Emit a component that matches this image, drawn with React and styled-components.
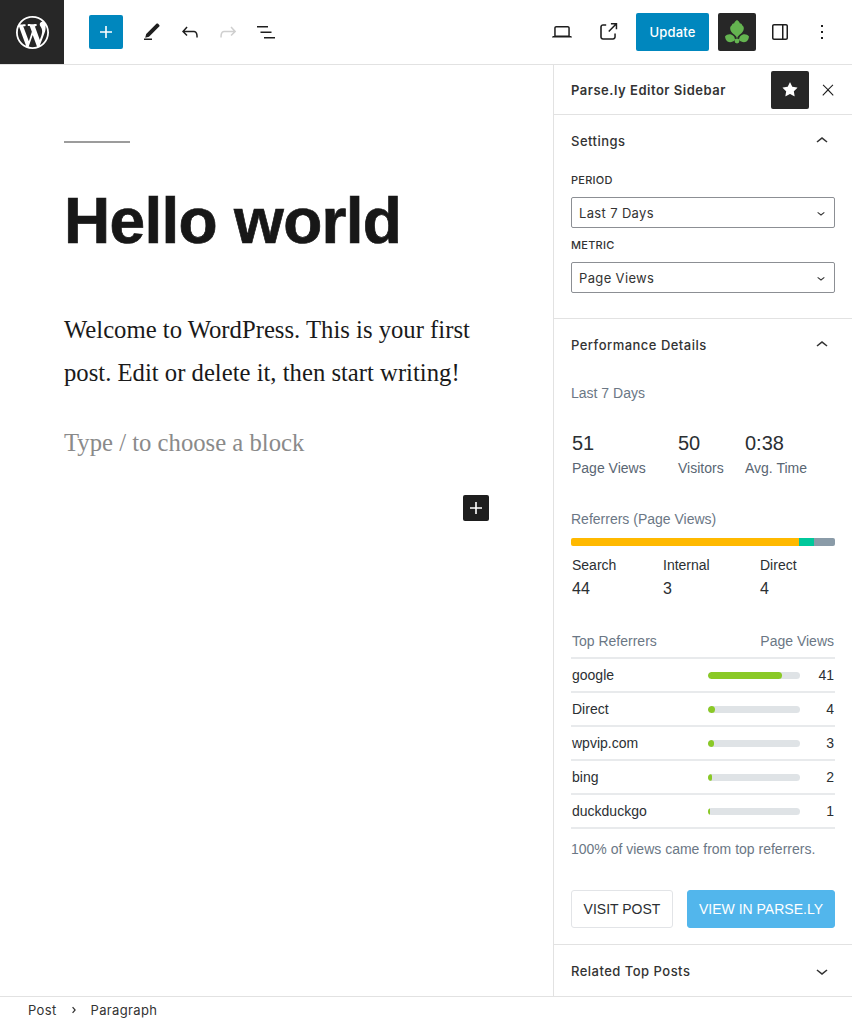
import React from 'react';
import styled, { createGlobalStyle } from 'styled-components';

const GlobalStyle = createGlobalStyle`
  html, body {
    margin: 0;
    padding: 0;
    background: #fff;
  }
  * {
    box-sizing: border-box;
  }
`;

const ui = `Inter, 'Liberation Sans', sans-serif`;
const parsely = `'Liberation Sans', Arial, sans-serif`;

const Page = styled.div`
  width: 852px;
  height: 1023px;
  display: flex;
  flex-direction: column;
  overflow: hidden;
  font-family: ${ui};
  color: #1e1e1e;
`;

// Top toolbar
const Header = styled.header`
  height: 65px;
  flex: none;
  display: flex;
  align-items: center;
  border-bottom: 1px solid #e2e2e2;
`;

const LogoTile = styled.div`
  width: 64px;
  height: 64px;
  flex: none;
  display: flex;
  align-items: center;
  justify-content: center;
  background: #272727;
`;

const HeaderLeft = styled.div`
  display: flex;
  align-items: center;
  gap: 6px;
  margin-left: 25px;
`;

const HeaderRight = styled.div`
  display: flex;
  align-items: center;
  margin-left: auto;
  margin-right: 14px;
`;

const IconSlot = styled.span`
  width: ${(p) => p.$w || 32}px;
  height: 32px;
  display: flex;
  align-items: center;
  justify-content: center;
  color: ${(p) => p.$color || '#1e1e1e'};
  margin-right: ${(p) => p.$mr || 0}px;
`;

const InsertButton = styled.div`
  width: 34px;
  height: 34px;
  margin-right: 7px;
  display: flex;
  align-items: center;
  justify-content: center;
  background: #0087be;
  border-radius: 2px;
  color: #fff;
`;

const UpdateButton = styled.div`
  width: 73px;
  height: 38px;
  display: flex;
  align-items: center;
  justify-content: center;
  background: #0087be;
  border-radius: 2px;
  color: #fff;
  font-size: 13px;
  font-weight: 500;
  letter-spacing: 0.2px;
  margin-right: 9px;
`;

const ParselyButton = styled.div`
  width: 38px;
  height: 38px;
  display: flex;
  align-items: center;
  justify-content: center;
  background: #272727;
  border-radius: 2px;
  margin-right: 8px;
`;

const Body = styled.div`
  flex: 1;
  min-height: 0;
  display: flex;
`;

// Post canvas
const Editor = styled.main`
  flex: 1;
  display: flex;
  flex-direction: column;
  padding: 76px 64px 0;
`;

const Rule = styled.div`
  width: 66px;
  height: 2px;
  background: #9c9c9c;
`;

const Title = styled.h1`
  margin: 36px 0 0;
  font-family: 'Liberation Sans', Arial, sans-serif;
  font-size: 64px;
  line-height: 84px;
  font-weight: 700;
  letter-spacing: -0.7px;
  -webkit-text-stroke: 0.7px #171717;
  color: #171717;
`;

const Paragraph = styled.p`
  margin: ${(p) => p.$mt}px 0 0;
  font-family: 'Liberation Serif', serif;
  font-size: 24.7px;
  line-height: 42.5px;
  color: ${(p) => p.$color || '#1a1a1a'};
`;

const Inserter = styled.div`
  width: 26px;
  height: 26px;
  margin: 30.5px 0 0 auto;
  display: flex;
  align-items: center;
  justify-content: center;
  background: #1e1e1e;
  border-radius: 2px;
  color: #fff;
`;

// Right sidebar
const Sidebar = styled.aside`
  width: 299px;
  flex: none;
  display: flex;
  flex-direction: column;
  border-left: 1px solid #e2e2e2;
`;

const SidebarHead = styled.div`
  height: 50px;
  flex: none;
  display: flex;
  align-items: center;
  padding-left: 17px;
  border-bottom: 1px solid #e2e2e2;
  font-size: 13px;
  font-weight: 600;
  letter-spacing: 0.52px;
  color: #333;
`;

const StarButton = styled.div`
  width: 38px;
  height: 38px;
  margin-left: auto;
  display: flex;
  align-items: center;
  justify-content: center;
  background: #272727;
  border-radius: 2px;
  color: #fff;
`;

const CloseSlot = styled.div`
  width: 38px;
  margin-right: 5px;
  display: flex;
  justify-content: center;
  color: #1e1e1e;
`;

const Panel = styled.section`
  flex: none;
  height: ${(p) => p.$h}px;
  padding: 0 17px;
  border-bottom: ${(p) => (p.$last ? 'none' : '1px solid #e2e2e2')};
`;

const PanelTitle = styled.div`
  height: ${(p) => p.$h || 52}px;
  display: flex;
  align-items: center;
  justify-content: space-between;
  font-size: 13px;
  font-weight: 500;
  letter-spacing: 0.48px;
  color: #333;

  svg {
    margin-right: 1px;
  }
`;

const FieldLabel = styled.div`
  font-size: 11px;
  line-height: 14px;
  font-weight: 500;
  letter-spacing: 0.25px;
  color: #333;
  margin: ${(p) => p.$mt}px 0 10px;
`;

const SelectBox = styled.div`
  height: 31px;
  display: flex;
  align-items: center;
  justify-content: space-between;
  padding: 0 5px 0 7px;
  border: 1px solid #8c8f94;
  border-radius: 2px;
  font-size: 13px;
  letter-spacing: 0.35px;
  color: #333;
`;

const MutedLine = styled.div`
  font-family: ${parsely};
  font-size: 14px;
  line-height: 18px;
  color: #6b7785;
  margin-top: ${(p) => p.$mt}px;
`;

const StatGrid = styled.div`
  display: flex;
  margin: 29px 0 0 1px;
  font-family: ${parsely};
`;

const Stat = styled.div`
  width: ${(p) => p.$w}px;
`;

const StatValue = styled.div`
  font-size: 20px;
  line-height: 24px;
  color: #2b2f33;
`;

const StatLabel = styled.div`
  font-size: 14px;
  line-height: 18px;
  margin-top: 4px;
  color: #596673;
`;

const StackBar = styled.div`
  height: 8px;
  margin-top: 10px;
  display: flex;
  border-radius: 2px;
  overflow: hidden;
`;

const StackPart = styled.div`
  width: ${(p) => p.$w}px;
  background: ${(p) => p.$color};
`;

const SourceGrid = styled.div`
  display: flex;
  margin: 10px 0 0 1px;
  font-family: ${parsely};
`;

const Source = styled.div`
  width: ${(p) => p.$w}px;
`;

const SourceLabel = styled.div`
  font-size: 14px;
  line-height: 18px;
  color: #2b2f33;
`;

const SourceValue = styled.div`
  font-size: 16px;
  line-height: 20px;
  margin-top: 5px;
  color: #2b2f33;
`;

const RefHead = styled.div`
  height: 27px;
  margin-top: 33px;
  padding: 0 1px 9px;
  display: flex;
  justify-content: space-between;
  border-bottom: 2px solid #e8eaec;
  font-family: ${parsely};
  font-size: 14px;
  line-height: 18px;
  color: #6b7785;
`;

const RefRow = styled.div`
  height: 34px;
  padding: 0 1px;
  display: flex;
  align-items: center;
  border-bottom: 2px solid #e8eaec;
  font-family: ${parsely};
  font-size: 14px;
  color: #2b2f33;
`;

const RefName = styled.span`
  width: 136px;
`;

const RefTrack = styled.div`
  width: 92px;
  height: 7px;
  background: #dfe3e6;
  border-radius: 4px;
  overflow: hidden;
`;

const RefFill = styled.div`
  height: 100%;
  background: #8ac926;
  border-radius: 4px;
`;

const RefCount = styled.span`
  margin-left: auto;
`;

const Actions = styled.div`
  display: flex;
  justify-content: space-between;
  margin-top: 32px;
  font-family: ${parsely};
  font-size: 14px;
`;

const ActionButton = styled.div`
  width: ${(p) => p.$w}px;
  height: 38px;
  display: flex;
  align-items: center;
  justify-content: center;
  border-radius: 3px;
  border: 1px solid ${(p) => (p.$primary ? '#52b6ec' : '#e2e4e7')};
  background: ${(p) => (p.$primary ? '#52b6ec' : '#fff')};
  color: ${(p) => (p.$primary ? '#fff' : '#2b2f33')};
`;

// Bottom breadcrumb bar
const StatusBar = styled.footer`
  height: 27px;
  flex: none;
  display: flex;
  align-items: center;
  padding-left: 28px;
  border-top: 1px solid #e2e2e2;
  background: #fff;
  font-size: 13px;
  letter-spacing: 0.35px;
  color: #333;
`;

const Crumb = styled.span`
  display: flex;
  align-items: center;
`;

const CrumbGap = styled.span`
  width: 34px;
  display: flex;
  justify-content: center;
`;

const Icon = ({ d, size = 24, fill = 'currentColor', viewBox = '0 0 24 24' }) => (
  <svg width={size} height={size} viewBox={viewBox} fill={fill} aria-hidden="true">
    <path d={d} />
  </svg>
);

const paths = {
  plus: 'M18 11.2h-5.2V6h-1.6v5.2H6v1.6h5.2V18h1.6v-5.2H18z',
  edit: 'M16.4 3.8c.5-.5 1.2-.5 1.7 0l1.1 1.1c.5.5.5 1.2 0 1.7L9 16.8l-3.8 1 1-3.8L16.4 3.8zM4 20h8v-1.5H4V20z',
  undo: 'M18.3 11.7c-.6-.6-1.4-.9-2.3-.9H6.7l2.9-3.3-1.1-1-4.5 5L8.5 16l1-1-2.7-2.7H16c.5 0 .9.2 1.3.5 1 1 1 3.4 1 4.5v.3h1.5v-.2c0-1.5 0-4.3-1.5-5.7z',
  redo: 'M15.6 6.5l-1.1 1 2.9 3.3H8c-.9 0-1.7.3-2.3.9-1.4 1.5-1.4 4.2-1.4 5.6v.2h1.5v-.3c0-1.1 0-3.5 1-4.5.3-.3.7-.5 1.3-.5h9.2L14.5 15l1.1 1.1 4.6-4.6-4.6-5z',
  list: 'M3 6h11v1.5H3V6zm3.5 5.5h11V13h-11v-1.5zM21 17H10v1.5h11V17z',
  laptop: 'M20.5 16h-.7V8c0-1.1-.9-2-2-2H6.2c-1.1 0-2 .9-2 2v8h-.7c-.8 0-1.5.7-1.5 1.5h20c0-.8-.7-1.5-1.5-1.5zM5.7 8c0-.3.2-.5.5-.5h11.6c.3 0 .5.2.5.5v7.6H5.7V8z',
  external: 'M18.2 17c0 .7-.6 1.2-1.2 1.2H7c-.7 0-1.2-.6-1.2-1.2V7c0-.7.6-1.2 1.2-1.2h3.2V4.2H7C5.5 4.2 4.2 5.5 4.2 7v10c0 1.5 1.2 2.8 2.8 2.8h10c1.5 0 2.8-1.2 2.8-2.8v-3.6h-1.5V17zM14.9 3v1.5h3.7l-6.4 6.4 1.1 1.1 6.4-6.4v3.7h1.5V3h-6.3z',
  drawer: 'M18 4H6c-1.1 0-2 .9-2 2v12c0 1.1.9 2 2 2h12c1.1 0 2-.9 2-2V6c0-1.1-.9-2-2-2zm-4 14.5H6c-.3 0-.5-.2-.5-.5V6c0-.3.2-.5.5-.5h8v13zm4.5-.5c0 .3-.2.5-.5.5h-2.5v-13H18c.3 0 .5.2.5.5v12z',
  more: 'M13 19h-2v-2h2v2zm0-6h-2v-2h2v2zm0-6h-2V5h2v2z',
  close: 'M13 11.8l6.1-6.3-1-1-6.1 6.2-6.1-6.2-1 1 6.1 6.3-6.5 6.7 1 1 6.5-6.6 6.5 6.6 1-1z',
  star: 'M11.776 4.454a.25.25 0 01.448 0l2.069 4.192a.25.25 0 00.188.137l4.626.672a.25.25 0 01.139.426l-3.348 3.263a.25.25 0 00-.072.222l.79 4.607a.25.25 0 01-.362.263l-4.138-2.175a.25.25 0 00-.232 0l-4.138 2.175a.25.25 0 01-.363-.263l.79-4.607a.25.25 0 00-.071-.222L4.754 9.881a.25.25 0 01.139-.426l4.626-.672a.25.25 0 00.188-.137l2.069-4.192z',
  up: 'M6.5 12.4L12 8l5.5 4.4-.9 1.2L12 10l-4.5 3.6-1-1.2z',
  down: 'M17.5 11.6L12 16l-5.5-4.4.9-1.2L12 14l4.5-3.6 1 1.2z',
  crumb: 'M10.8622 8.04053L14.2805 12.0286L10.8622 16.0167L9.72327 15.0405L12.3049 12.0286L9.72327 9.01672L10.8622 8.04053Z',
  wp: 'M20 10c0-5.51-4.49-10-10-10C4.48 0 0 4.49 0 10c0 5.52 4.48 10 10 10 5.51 0 10-4.48 10-10zM7.78 15.37L4.37 6.22c.55-.02 1.17-.08 1.17-.08.5-.06.44-1.13-.06-1.11 0 0-1.45.11-2.37.11-.18 0-.37 0-.58-.01C4.12 2.69 6.87 1.11 10 1.11c2.33 0 4.45.87 6.05 2.34-.68-.11-1.65.39-1.65 1.58 0 .74.45 1.36.9 2.1.35.61.55 1.36.55 2.46 0 1.49-1.4 5-1.4 5l-3.03-8.37c.54-.02.82-.17.82-.17.5-.05.44-1.25-.06-1.22 0 0-1.44.12-2.38.12-.87 0-2.33-.12-2.33-.12-.5-.03-.56 1.2-.06 1.22l.92.08 1.26 3.41zM17.41 10c.24-.64.74-1.87.43-4.25.7 1.29 1.05 2.71 1.05 4.25 0 3.29-1.73 6.24-4.4 7.78.97-2.59 1.94-5.2 2.92-7.78zM6.1 18.09C3.12 16.65 1.11 13.53 1.11 10c0-1.3.23-2.48.72-3.59C3.25 10.3 4.67 14.2 6.1 18.09zm4.03-6.63l2.58 6.98c-.86.29-1.76.45-2.71.45-.79 0-1.57-.11-2.29-.33.81-2.38 1.62-4.74 2.42-7.1z',
};

// Parse.ly sprig: a lobed centre leaf, two side leaves and a small round bud
const ParselyLogo = () => (
  <svg width="26" height="26" viewBox="0 0 26 26" fill="#64b450" aria-hidden="true">
    <path d="M13 1C14.5 2 15.5 3 15.8 4.2C17 4.2 18 5 18.2 6.2C19.4 7 20 8.3 19.8 9.8C19.6 12 18 14.5 15.5 15.8L13.8 17.5V18.5H12.2V17.5L10.5 15.8C8 14.5 6.4 12 6.2 9.8C6 8.3 6.6 7 7.8 6.2C8 5 9 4.2 10.2 4.2C10.5 3 11.5 2 13 1Z" />
    <path d="M1 17.5C3 15 7 14.5 9.5 17C10.5 18 11 19.5 11 21C9 23 6 24 3.5 22.5C2 21.5 1.3 19.5 1 17.5Z" />
    <path d="M25 17.5C23 15 19 14.5 16.5 17C15.5 18 15 19.5 15 21C17 23 20 24 22.5 22.5C24 21.5 24.7 19.5 25 17.5Z" />
    <circle cx="13" cy="22" r="2.4" />
  </svg>
);

const referrers = [
  { name: 'google', pct: 80, count: 41 },
  { name: 'Direct', pct: 8, count: 4 },
  { name: 'wpvip.com', pct: 6, count: 3 },
  { name: 'bing', pct: 4, count: 2 },
  { name: 'duckduckgo', pct: 2, count: 1 },
];

const App = () => {
  return (
    <>
      <GlobalStyle />
      <Page>
        <Header>
          <LogoTile>
            <Icon d={paths.wp} size={33} viewBox="0 0 20 20" fill="#fff" />
          </LogoTile>
          <HeaderLeft>
            <InsertButton>
              <Icon d={paths.plus} />
            </InsertButton>
            <IconSlot>
              <Icon d={paths.edit} />
            </IconSlot>
            <IconSlot>
              <Icon d={paths.undo} />
            </IconSlot>
            <IconSlot $color="#cfcfcf">
              <Icon d={paths.redo} />
            </IconSlot>
            <IconSlot>
              <Icon d={paths.list} />
            </IconSlot>
          </HeaderLeft>
          <HeaderRight>
            <IconSlot $mr={14}>
              <Icon d={paths.laptop} />
            </IconSlot>
            <IconSlot $mr={12}>
              <Icon d={paths.external} />
            </IconSlot>
            <UpdateButton>Update</UpdateButton>
            <ParselyButton>
              <ParselyLogo />
            </ParselyButton>
            <IconSlot $mr={10}>
              <Icon d={paths.drawer} />
            </IconSlot>
            <IconSlot>
              <Icon d={paths.more} />
            </IconSlot>
          </HeaderRight>
        </Header>

        <Body>
          <Editor>
            <Rule />
            <Title>Hello world</Title>
            <Paragraph $mt={46}>
              Welcome to WordPress. This is your first post. Edit or delete it, then start writing!
            </Paragraph>
            <Paragraph $mt={28} $color="#8a8a8a">
              Type / to choose a block
            </Paragraph>
            <Inserter>
              <Icon d={paths.plus} />
            </Inserter>
          </Editor>

          <Sidebar>
            <SidebarHead>
              Parse.ly Editor Sidebar
              <StarButton>
                <Icon d={paths.star} />
              </StarButton>
              <CloseSlot>
                <Icon d={paths.close} size={18} />
              </CloseSlot>
            </SidebarHead>

            <Panel $h={204}>
              <PanelTitle>
                Settings
                <Icon d={paths.up} />
              </PanelTitle>
              <FieldLabel $mt={6}>PERIOD</FieldLabel>
              <SelectBox>
                Last 7 Days
                <Icon d={paths.down} size={16} />
              </SelectBox>
              <FieldLabel $mt={10}>METRIC</FieldLabel>
              <SelectBox>
                Page Views
                <Icon d={paths.down} size={16} />
              </SelectBox>
            </Panel>

            <Panel $h={626}>
              <PanelTitle>
                Performance Details
                <Icon d={paths.up} />
              </PanelTitle>
              <MutedLine $mt={13}>Last 7 Days</MutedLine>
              <StatGrid>
                <Stat $w={106}>
                  <StatValue>51</StatValue>
                  <StatLabel>Page Views</StatLabel>
                </Stat>
                <Stat $w={67}>
                  <StatValue>50</StatValue>
                  <StatLabel>Visitors</StatLabel>
                </Stat>
                <Stat $w={80}>
                  <StatValue>0:38</StatValue>
                  <StatLabel>Avg. Time</StatLabel>
                </Stat>
              </StatGrid>
              <MutedLine $mt={33}>Referrers (Page Views)</MutedLine>
              <StackBar>
                <StackPart $w={228} $color="#ffb900" />
                <StackPart $w={15} $color="#00c89b" />
                <StackPart $w={21} $color="#8a9ba8" />
              </StackBar>
              <SourceGrid>
                <Source $w={91}>
                  <SourceLabel>Search</SourceLabel>
                  <SourceValue>44</SourceValue>
                </Source>
                <Source $w={97}>
                  <SourceLabel>Internal</SourceLabel>
                  <SourceValue>3</SourceValue>
                </Source>
                <Source $w={70}>
                  <SourceLabel>Direct</SourceLabel>
                  <SourceValue>4</SourceValue>
                </Source>
              </SourceGrid>
              <RefHead>
                <span>Top Referrers</span>
                <span>Page Views</span>
              </RefHead>
              {referrers.map((r) => (
                <RefRow key={r.name}>
                  <RefName>{r.name}</RefName>
                  <RefTrack>
                    <RefFill style={{ width: `${r.pct}%` }} />
                  </RefTrack>
                  <RefCount>{r.count}</RefCount>
                </RefRow>
              ))}
              <MutedLine $mt={11}>100% of views came from top referrers.</MutedLine>
              <Actions>
                <ActionButton $w={102}>VISIT POST</ActionButton>
                <ActionButton $w={148} $primary>
                  VIEW IN PARSE.LY
                </ActionButton>
              </Actions>
            </Panel>

            <Panel $h={52} $last>
              <PanelTitle>
                Related Top Posts
                <Icon d={paths.down} />
              </PanelTitle>
            </Panel>
          </Sidebar>
        </Body>

        <StatusBar>
          <Crumb>Post</Crumb>
          <CrumbGap>
            <Icon d={paths.crumb} size={20} />
          </CrumbGap>
          <Crumb>Paragraph</Crumb>
        </StatusBar>
      </Page>
    </>
  );
};

export default App;
